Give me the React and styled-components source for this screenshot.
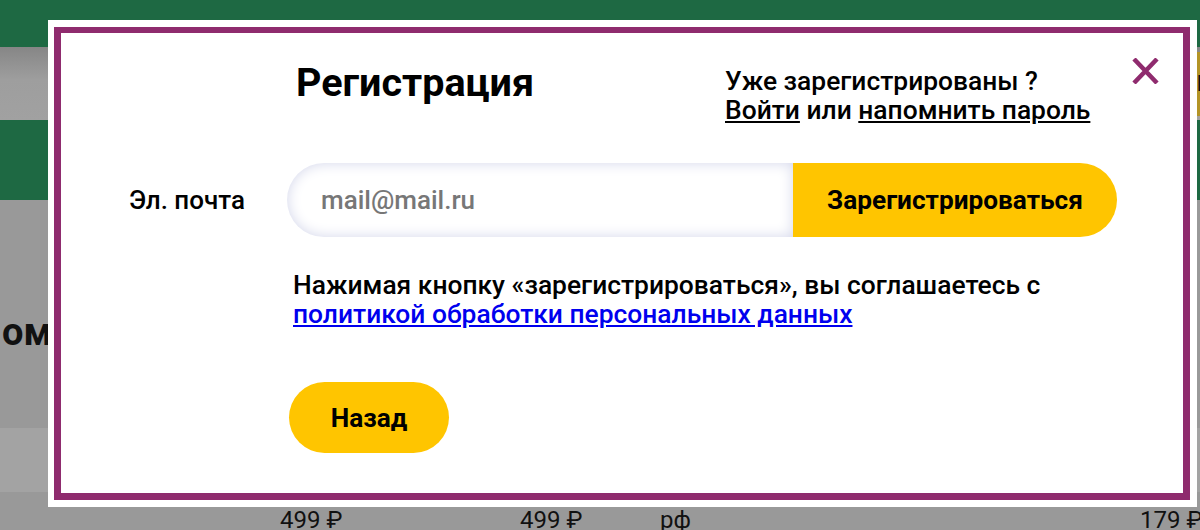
import styled, { createGlobalStyle } from "styled-components";

const GlobalStyle = createGlobalStyle`
  body {
    margin: 0;
    font-family: Roboto, "Noto Sans", Arial, sans-serif;
  }
`;

const Page = styled.div`
  position: relative;
  height: 530px;
  overflow: hidden;
  background: #999999;
`;

const TopBar = styled.div`
  height: 47px;
  background: #1e6943;
`;

const SubBar = styled.div`
  height: 73px;
  display: flex;
  justify-content: flex-end;
  align-items: center;
  background: linear-gradient(180deg, #868686 0%, #9e9e9e 45%, #a1a1a1 100%);
`;

const SubBarButton = styled.div`
  width: 80px;
  height: 64px;
  margin-right: -77px;
  background: #b39426;
  color: #111;
  font-size: 22px;
  font-weight: 700;
  line-height: 64px;
  padding-left: 2px;
`;

const NavBar = styled.div`
  height: 80px;
  background: #1e6943;
`;

const Content = styled.div`
  padding-top: 110px;
`;

const SectionTitle = styled.h2`
  margin: 0;
  height: 118px;
  padding-left: 2px;
  font-size: 38px;
  line-height: 44px;
  font-weight: 700;
  color: #111;
`;

const Stripe = styled.div`
  height: 64px;
  background: #a3a3a3;
`;

const PriceRow = styled.div`
  display: grid;
  grid-template-columns: 240px 140px 480px auto;
  padding-left: 280px;
  padding-top: 14px;
  font-size: 24px;
  line-height: 28px;
  color: #111;
  white-space: nowrap;
`;

const Modal = styled.div`
  position: absolute;
  left: 48px;
  top: 20px;
  width: 1149px;
  height: 487px;
  box-sizing: border-box;
  padding: 7px 7px 7px 6px;
  background: #fff;
`;

const Frame = styled.div`
  position: relative;
  height: 100%;
  box-sizing: border-box;
  border-style: solid;
  border-color: #8f2b6e;
  border-width: 6px 7px 7px 7px;
  padding-top: 27px;
  display: grid;
  grid-template-columns: 226px 830px;
  align-content: start;
  color: #000;
`;

const CloseButton = styled.button`
  position: absolute;
  top: 25px;
  right: 24px;
  width: 27px;
  height: 26px;
  padding: 0;
  border: none;
  background: none;
  cursor: pointer;
`;

const Header = styled.div`
  grid-column: 2;
  display: grid;
  grid-template-columns: 438px auto;
  align-items: start;
`;

const Title = styled.h1`
  margin: 0;
  padding-left: 9px;
  font-size: 39.5px;
  line-height: 46px;
  font-weight: 700;
`;

const AuthHint = styled.div`
  margin-top: 7px;
  font-size: 26.4px;
  line-height: 29px;
  font-weight: 500;
`;

const AuthLink = styled.a`
  color: #000;
  text-decoration: underline;
  cursor: pointer;
`;

const Label = styled.label`
  margin-top: 38px;
  padding-right: 42px;
  display: flex;
  align-items: center;
  justify-content: flex-end;
  font-size: 26px;
  font-weight: 500;
`;

const Field = styled.div`
  margin-top: 38px;
  display: flex;
  height: 74px;
`;

const EmailInput = styled.input`
  width: 506px;
  box-sizing: border-box;
  border: none;
  outline: none;
  border-radius: 37px 0 0 37px;
  padding-left: 34px;
  background: #fff;
  box-shadow: inset 0 0 14px #d3d6ea;
  font-family: inherit;
  font-size: 26px;
  font-weight: 500;
  color: #333;

  &::placeholder {
    color: #777;
  }
`;

const YellowButton = styled.button`
  border: none;
  background: #ffc500;
  color: #000;
  font-family: inherit;
  font-weight: 700;
  font-size: 26.2px;
  cursor: pointer;
  padding: 0;
`;

const SubmitButton = styled(YellowButton)`
  width: 324px;
  border-radius: 0 37px 37px 0;
`;

const Agreement = styled.p`
  grid-column: 2;
  margin: 34px 0 0;
  padding-left: 6px;
  font-size: 26.4px;
  line-height: 29px;
  font-weight: 500;
`;

const PolicyLink = styled.a`
  color: #0000ee;
  text-decoration: underline;
  cursor: pointer;
`;

const BackButton = styled(YellowButton)`
  grid-column: 2;
  margin: 53px 0 0 2px;
  width: 160px;
  height: 71px;
  border-radius: 36px;
`;

const App = () => {
  return (
    <Page>
      <GlobalStyle />
      <TopBar />
      <SubBar>
        <SubBarButton>Н</SubBarButton>
      </SubBar>
      <NavBar />
      <Content>
        <SectionTitle>ом</SectionTitle>
        <Stripe />
        <PriceRow>
          <span>499 ₽</span>
          <span>499 ₽</span>
          <span>рф</span>
          <span>179 ₽</span>
        </PriceRow>
      </Content>

      <Modal>
        <Frame>
          <CloseButton aria-label="Закрыть">
            <svg width="27" height="26" viewBox="0 0 27 26">
              <path
                d="M2 1 L25 25 M25 1 L2 25"
                stroke="#8f2b6e"
                strokeWidth="4.5"
                fill="none"
              />
            </svg>
          </CloseButton>
          <Header>
            <Title>Регистрация</Title>
            <AuthHint>
              Уже зарегистрированы ?
              <br />
              <AuthLink>Войти</AuthLink> или <AuthLink>напомнить пароль</AuthLink>
            </AuthHint>
          </Header>
          <Label htmlFor="email">Эл. почта</Label>
          <Field>
            <EmailInput id="email" type="email" placeholder="mail@mail.ru" />
            <SubmitButton>Зарегистрироваться</SubmitButton>
          </Field>
          <Agreement>
            Нажимая кнопку «зарегистрироваться», вы соглашаетесь с
            <br />
            <PolicyLink>политикой обработки персональных данных</PolicyLink>
          </Agreement>
          <BackButton>Назад</BackButton>
        </Frame>
      </Modal>
    </Page>
  );
};

export default App;
